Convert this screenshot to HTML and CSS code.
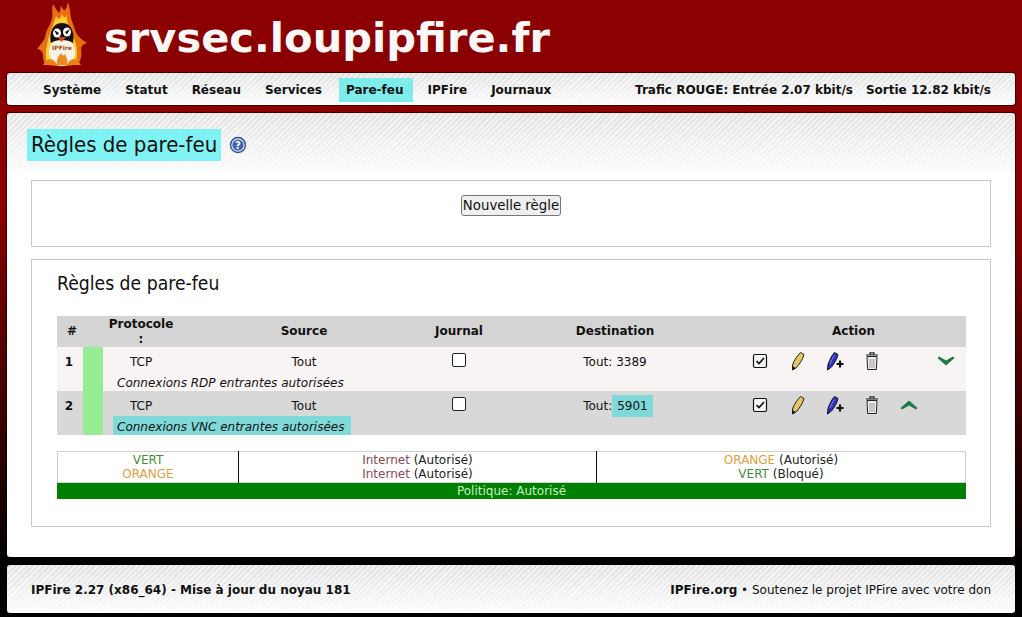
FILE: index.html
```html
<!DOCTYPE html>
<html lang="fr">
<head>
    <meta charset="UTF-8">
    <meta name="viewport" content="width=device-width, initial-scale=1.0">
    <title>srvsec.loupipfire.fr</title>
    <link rel="stylesheet" href="styles.css">
</head>
<body>
    <header class="banner">
        <svg class="logo" width="50" height="66" viewBox="0 0 50 66">
            <path d="M8 62C5 56 7 52 5 50C4 48 2 47 0 47C3 43 6 40 8 36C9 28 12 25 14 20C17 14 14 8 16 2C18 6 20 8 22 11C24 9 23 6 24 4C26 7 27 9 28 8C30 6 30 3 31 0C33 6 33 10 34 16C37 24 38 30 41 34C44 37 47 39 50 41C47 42 45 43 44 46C45 54 44 58 41 62C30 65 18 65 8 62Z" fill="#e9700f"/>
            <path d="M10 60C8 52 9 46 11 38C13 30 16 24 19 14C21 17 23 19 25 12C27 16 28 17 29.500 13C30 22 33 28 37 36C40 44 41 52 39 60Z" fill="#fbce3a"/>
            <ellipse cx="25" cy="50" rx="13" ry="14" fill="#f7f1e6"/>
            <path d="M14 41C12 32 15 21 25 21C35 21 38 32 36 41C31 37 19 37 14 41Z" fill="#16100e"/>
            <ellipse cx="20" cy="31" rx="4" ry="4.500" fill="#fff"/>
            <ellipse cx="30" cy="30" rx="4" ry="4.500" fill="#fff"/>
            <path d="M17 28L22 31L20 33.500ZM33 27L28 30L30 32.500Z" fill="#111"/>
            <path d="M20.500 35H29L24.500 40Z" fill="#d8401a"/>
            <text x="25" y="48" class="logo-word">IPFire</text>
            <path d="M6 63C10 56 16 55 20 63ZM44 63C40 56 34 55 30 63Z" fill="#ef7d14"/>
            <path d="M20 63C19 57 22 54 24 51C25 54 27 54 28 52C30 56 31 59 30 63Z" fill="#ef8a1e"/>
        </svg>
        <span class="site-name">srvsec.loupipfire.fr</span>
    </header>

    <nav class="panel menu">
        <ul class="menu-items">
            <li>Système</li>
            <li>Statut</li>
            <li>Réseau</li>
            <li>Services</li>
            <li class="current">Pare-feu</li>
            <li>IPFire</li>
            <li>Journaux</li>
        </ul>
        <div class="traffic">
            <span>Trafic ROUGE: Entrée 2.07 kbit/s</span>
            <span>Sortie 12.82 kbit/s</span>
        </div>
    </nav>

    <main class="panel content">
        <div class="page-title">
            <h1><span class="hl">Règles de pare-feu</span></h1>
            <svg class="help" width="18" height="18" viewBox="0 0 18 18">
                <circle cx="9" cy="9" r="7.500" fill="#dfe6f2" stroke="#2c4f92" stroke-width="1.400"/>
                <circle cx="9" cy="9" r="5.600" fill="#3f64ab"/>
                <text x="9" y="13" class="help-mark">?</text>
            </svg>
        </div>

        <section class="box box-new">
            <button type="button">Nouvelle règle</button>
        </section>

        <section class="box box-rules">
            <h2>Règles de pare-feu</h2>

            <table class="rules">
                <colgroup>
                    <col class="c-num"><col class="c-color"><col class="c-proto"><col class="c-src"><col class="c-log"><col class="c-dst">
                    <col class="c-a1"><col class="c-a2"><col class="c-a3"><col class="c-a4"><col class="c-a5"><col class="c-a6">
                </colgroup>
                <thead>
                    <tr>
                        <th class="th-num">#</th>
                        <th></th>
                        <th>Protocole<br>:</th>
                        <th>Source</th>
                        <th>Journal</th>
                        <th>Destination</th>
                        <th colspan="6">Action</th>
                    </tr>
                </thead>
                <tbody>
                    <tr class="row-a top">
                        <td class="num" rowspan="2">1</td>
                        <td class="allow" rowspan="2"></td>
                        <td>TCP</td>
                        <td>Tout</td>
                        <td><span class="checkbox"></span></td>
                        <td>Tout: 3389</td>
                        <td><svg class="i i-check" width="16" height="16" viewBox="0 0 16 16"><use href="#i-check"/></svg></td>
                        <td><svg class="i" width="16" height="20" viewBox="0 0 16 20"><use href="#i-pencil"/></svg></td>
                        <td><svg class="i" width="18" height="20" viewBox="0 0 18 20"><use href="#i-copy"/></svg></td>
                        <td><svg class="i" width="16" height="20" viewBox="0 0 16 20"><use href="#i-trash"/></svg></td>
                        <td></td>
                        <td class="cell-down"><svg class="i i-arrow" width="18" height="10" viewBox="0 0 18 10"><use href="#i-down"/></svg></td>
                    </tr>
                    <tr class="row-a">
                        <td class="remark" colspan="10"><span>Connexions RDP entrantes autorisées</span></td>
                    </tr>
                    <tr class="row-b top">
                        <td class="num" rowspan="2">2</td>
                        <td class="allow" rowspan="2"></td>
                        <td>TCP</td>
                        <td>Tout</td>
                        <td><span class="checkbox"></span></td>
                        <td class="dst-hl">Tout:<span class="port">5901</span></td>
                        <td><svg class="i i-check" width="16" height="16" viewBox="0 0 16 16"><use href="#i-check"/></svg></td>
                        <td><svg class="i" width="16" height="20" viewBox="0 0 16 20"><use href="#i-pencil"/></svg></td>
                        <td><svg class="i" width="18" height="20" viewBox="0 0 18 20"><use href="#i-copy"/></svg></td>
                        <td><svg class="i" width="16" height="20" viewBox="0 0 16 20"><use href="#i-trash"/></svg></td>
                        <td class="cell-up"><svg class="i i-arrow" width="18" height="10" viewBox="0 0 18 10"><use href="#i-up"/></svg></td>
                        <td></td>
                    </tr>
                    <tr class="row-b">
                        <td class="remark" colspan="10"><span class="hl">Connexions VNC entrantes autorisées</span></td>
                    </tr>
                </tbody>
            </table>

            <table class="zones">
                <tr>
                    <td class="z1"><span class="green">VERT</span><br><span class="orange">ORANGE</span></td>
                    <td class="z2"><span class="red">Internet</span> (Autorisé)<br><span class="red">Internet</span> (Autorisé)</td>
                    <td class="z3"><span class="orange">ORANGE</span> (Autorisé)<br><span class="green">VERT</span> (Bloqué)</td>
                </tr>
            </table>
            <div class="policy">Politique: Autorisé</div>
        </section>
    </main>

    <footer class="panel bottom">
        <strong>IPFire 2.27 (x86_64) - Mise à jour du noyau 181</strong>
        <span><strong>IPFire.org</strong> • Soutenez le projet IPFire avec votre don</span>
    </footer>

    <svg class="defs" width="0" height="0">
        <defs>
            <g id="i-check">
                <rect x="1.500" y="1.500" width="13" height="13" rx="1.500" fill="#f4f4f4" stroke="#111" stroke-width="1.200"/>
                <path d="M4.500 8L7 10.500L12 5" fill="none" stroke="#111" stroke-width="1.700"/>
            </g>
            <g id="i-pencil">
                <path d="M10.500 1.500L14 3.500C13 8 9 14 6 17L2.500 19L2.500 14C4 9 8 4 10.500 1.500Z" fill="#e3c766" stroke="#222" stroke-width="1"/>
                <path d="M2.500 15L5.500 17L2.500 19Z" fill="#111"/>
            </g>
            <g id="i-copy">
                <path d="M8.500 1.500L12 3.500C11 8 8 13 5.500 16L1.500 19L2 13.500C4 8 6 4 8.500 1.500Z" fill="#3030c8" stroke="#111" stroke-width="1"/>
                <path d="M8.500 4.500C6.500 7 5 10 4 13" fill="none" stroke="#7f86e8" stroke-width="1"/>
                <path d="M14 9.500V16.500M10.500 13H17.500" stroke="#111" stroke-width="2.200"/>
            </g>
            <g id="i-trash">
                <path d="M3 5.500H13L12.400 18.500H3.600Z" fill="#ececec" stroke="#222" stroke-width="1"/>
                <path d="M2 4H14M6 3.500V1.800H10V3.500" fill="none" stroke="#222" stroke-width="1.200"/>
                <path d="M6 8V17M8 8V17M10 8V17" stroke="#a0a0a0" stroke-width="1"/>
            </g>
            <path id="i-down" d="M0.500 2L2 0.500L9 4.500L16 0.500L17.500 2L9 9.500Z" fill="#1c7a44"/>
            <path id="i-up" d="M0.500 8L2 9.500L9 5.500L16 9.500L17.500 8L9 0.500Z" fill="#1c7a44"/>
        </defs>
    </svg>
</body>
</html>
```

FILE: styles.css
```css
html {
    height: 100%;
}
body {
    font-family: "DejaVu Sans", sans-serif;
    font-size: 12px;
    color: #111;
    margin: 0;
    padding: 0 7px;
    height: 617px;
    box-sizing: border-box;
    overflow: hidden;
    background: linear-gradient(to bottom, #8b0000 0, #8b0000 200px, #000 570px);
}
.banner {
    height: 73px;
    display: flex;
    align-items: center;
    padding-left: 30px;
}
.logo {
    margin-right: 17px;
    margin-top: -3px;
}
.logo-word {
    font-size: 6px;
    font-weight: bold;
    text-anchor: middle;
    fill: #a8480a;
}
.site-name {
    font-size: 41.6px;
    font-weight: bold;
    color: #fbf7f7;
    margin-top: 2px;
}
.panel {
    border-radius: 3px;
    background-color: #fff;
    background-image:
        repeating-linear-gradient(135deg, rgba(255,255,255,.6) 0, rgba(255,255,255,.6) 1.5px, transparent 1.5px, transparent 4px),
        linear-gradient(to bottom, #e2e2e2, #fcfcfc);
    background-repeat: no-repeat;
    box-shadow: 0 0 0 1px rgba(0,0,0,.55);
}
.menu {
    height: 32px;
    box-sizing: border-box;
    display: flex;
    justify-content: space-between;
    align-items: center;
    padding: 2px 24px 0 29px;
    font-weight: bold;
    margin-bottom: 8px;
}
.menu-items {
    list-style: none;
    display: flex;
    margin: 0;
    padding: 0;
}
.menu-items li {
    padding: 5px 10px 5px 7px;
    margin-right: 7px;
}
.menu-items .current {
    background-color: #7fecec;
}
.traffic {
    display: flex;
    gap: 13px;
}
.content {
    height: 444px;
    box-sizing: border-box;
    padding: 16px 24px 0;
    background-size: 100% 100%, 100% 60px;
    margin-bottom: 8px;
}
.page-title {
    display: flex;
    align-items: center;
    height: 32px;
    margin-bottom: 19px;
}
h1 {
    font-family: "DejaVu Sans Condensed", "DejaVu Sans", sans-serif;
    font-size: 22px;
    font-weight: normal;
    margin: 0 8px 0 -4px;
}
.hl {
    background-color: #7ff3f3;
}
h1 .hl {
    display: block;
    padding: 0 4px;
    line-height: 32px;
}
.box {
    border: 1px solid #c8c8c8;
    background-color: #fff;
}
.box-new {
    height: 67px;
    box-sizing: border-box;
    padding-top: 14px;
    text-align: center;
    margin-bottom: 12px;
}
button {
    font-family: "DejaVu Sans", sans-serif;
    font-size: 13.33px;
    padding: 0 1px;
    height: 21px;
    color: #111;
    background-color: #efefef;
    border: 1px solid #767676;
    border-radius: 3px;
}
.box-rules {
    height: 268px;
    box-sizing: border-box;
    padding: 13px 25px 0;
}
h2 {
    font-family: "DejaVu Sans Condensed", "DejaVu Sans", sans-serif;
    font-size: 19.2px;
    font-weight: normal;
    margin: 0 0 21px;
    line-height: 22px;
}
table {
    border-collapse: collapse;
    table-layout: fixed;
    width: 909px;
}
.c-num { width: 26px; }
.c-color { width: 20px; }
.c-proto { width: 76px; }
.c-src { width: 250px; }
.c-log { width: 60px; }
.c-dst { width: 252px; }
.c-a1, .c-a2 { width: 38px; }
.c-a3 { width: 36px; }
.c-a4 { width: 37px; }
.c-a5 { width: 39px; }
.c-a6 { width: 37px; }
.rules th {
    height: 31px;
    padding: 0;
    background-color: #d4d4d4;
    font-size: 12px;
    line-height: 15px;
}
.rules .th-num {
    padding-left: 4px;
    box-sizing: border-box;
}
.rules td {
    padding: 0;
    text-align: center;
    vertical-align: middle;
}
.rules .top td {
    height: 25px;
    vertical-align: top;
    padding-top: 8px;
    box-sizing: border-box;
    line-height: 14px;
}
.rules .top td.allow {
    padding: 0;
    background-color: #95ee95;
}
.rules .top td.num {
    font-weight: bold;
    padding-right: 2px;
}
.rules .top td.dst-hl {
    padding-left: 6px;
}
.rules .top td.cell-down {
    padding-right: 4px;
}
.rules .top td.cell-up {
    padding-right: 2px;
}
.row-a td {
    background-color: #f9f4f4;
}
.row-b td {
    background-color: #d8d8d8;
}
.rules .remark {
    height: 19px;
    text-align: left;
    font-style: italic;
    padding-left: 14px;
    vertical-align: top;
}
.rules .remark span {
    display: block;
    width: max-content;
    line-height: 15px;
    padding-top: 4px;
}
.rules .remark .hl {
    background-color: #7fd9d9;
    margin-left: -4px;
    padding: 4px 7px 0 4px;
}
.rules .port {
    display: inline-block;
    background-color: #7fd9d9;
    padding: 4px 5px;
    margin: -4px 0;
    line-height: 14px;
}
.i {
    display: block;
    margin: -4px auto 0;
}
.i-check {
    margin-top: -2px;
}
.i-arrow {
    margin-top: 1px;
}
.checkbox {
    display: block;
    width: 12px;
    height: 12px;
    background: #fff;
    border: 1px solid #222;
    border-radius: 2px;
    margin: -2px auto 0;
}
.zones {
    margin-top: 16px;
    height: 32px;
    border: 1px solid #d0d0d0;
    color: #222;
}
.zones td {
    padding: 0;
    text-align: center;
    line-height: 14px;
    vertical-align: middle;
}
.zones .z1 { width: 180px; border-right: 1px solid #111; }
.zones .z2 { width: 357px; border-right: 1px solid #111; }
.green { color: #3f8f3f; }
.orange { color: #e0a040; }
.red { color: #8b4a55; }
.policy {
    background-color: #007f00;
    color: #c4f0c4;
    height: 16px;
    line-height: 16px;
    text-align: center;
    width: 909px;
}
.bottom {
    height: 48px;
    box-sizing: border-box;
    display: flex;
    justify-content: space-between;
    align-items: center;
    padding: 2px 24px 0;
}
.help-mark {
    font-size: 10px;
    font-weight: bold;
    text-anchor: middle;
    fill: #fff;
}
.defs {
    position: absolute;
}
```
